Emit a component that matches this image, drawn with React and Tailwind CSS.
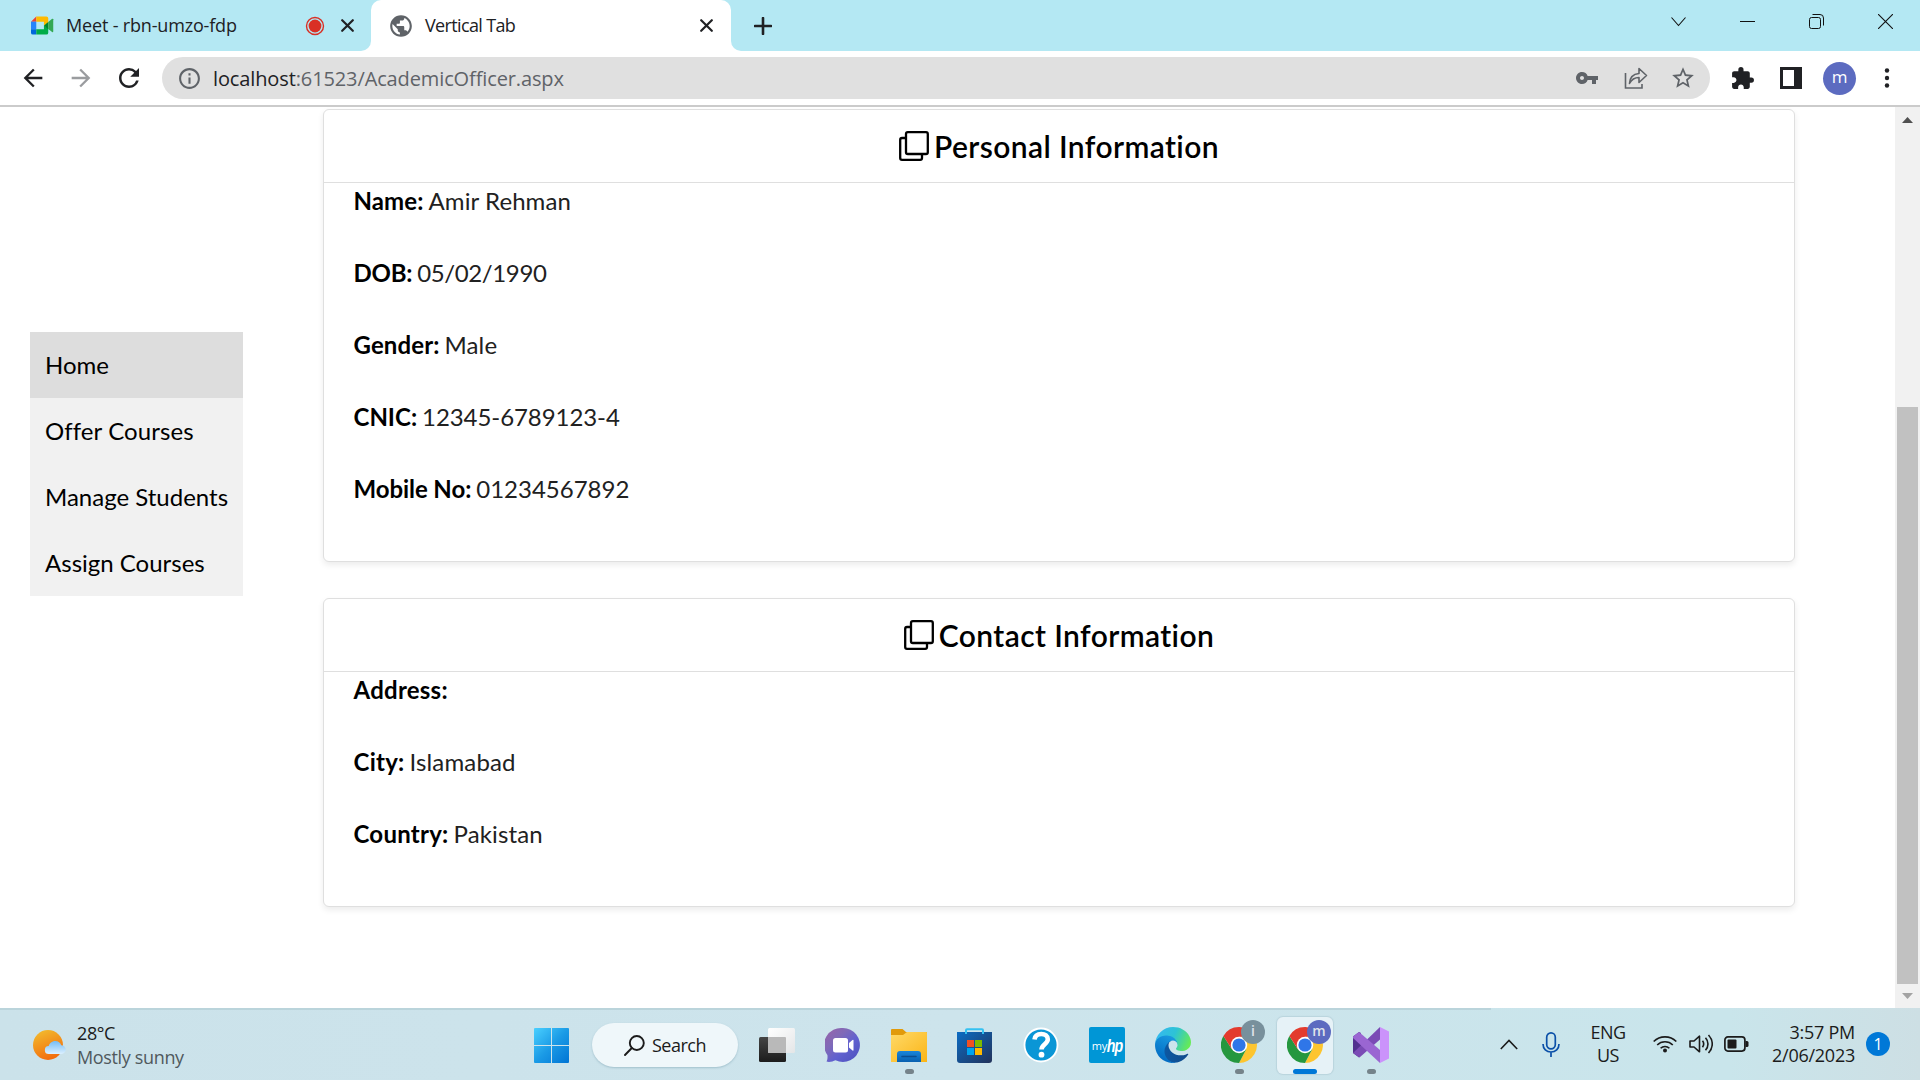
import React from "react";
import {
  MdInfoOutline,
  MdVpnKey,
  MdStarBorder,
  MdExtension,
  MdArrowBack,
  MdArrowForward,
  MdRefresh,
  MdPublic,
} from "react-icons/md";

const ui = "font-['Open_Sans','Noto_Sans',sans-serif]";

function Cross({ size = 13, w = 2.2 }) {
  return (
    <svg width={size} height={size} viewBox="0 0 13 13" className="shrink-0">
      <path d="M1.2 1.2 11.8 11.8M11.8 1.2 1.2 11.8" stroke="#202124" strokeWidth={w} strokeLinecap="round" />
    </svg>
  );
}

function MeetIcon() {
  return (
    <svg width="23" height="19" viewBox="0 0 24 19" className="mr-px shrink-0">
      <path d="M0 5.5 5.5 0v5.5z" fill="#ea4335" />
      <path d="M5.5 0H16a2 2 0 0 1 2 2v5l-4.5 2.5v-4h-8z" fill="#ffba00" />
      <path d="M0 5.5h5.5v8H0z" fill="#2684fc" />
      <path d="M0 13.5h5.5V19H2a2 2 0 0 1-2-2z" fill="#0066da" />
      <path d="M5.5 13.5h8v-4L18 12v5a2 2 0 0 1-2 2H5.5z" fill="#00ac47" />
      <path d="M13.5 9.5 18 5.8v7.5z" fill="#00832d" />
      <path d="m18 5.8 4-3.3c.6-.4 1.2 0 1.2.6v12.6c0 .7-.7 1-1.2.6l-4-3.2z" fill="#34a853" />
    </svg>
  );
}

function TabStrip() {
  return (
    <div className="flex h-[51px] bg-[#b4e8f3]">
      <div className="flex w-[371px] bg-white">
        <div className="flex h-[51px] w-[371px] items-center rounded-br-[10px] bg-[#b4e8f3] pl-[31px]">
          <MeetIcon />
          <span className="ml-[11px] w-[239px] whitespace-nowrap text-[18px] tracking-[-0.17px] text-[#202124]">Meet - rbn-umzo-fdp</span>
          <svg width="20" height="20" viewBox="0 0 20 20" className="shrink-0">
            <circle cx="10" cy="10" r="8.5" fill="none" stroke="#d93025" strokeWidth="1.4" />
            <circle cx="10" cy="10" r="6.4" fill="#d93025" />
          </svg>
          <span className="ml-4"><Cross /></span>
        </div>
      </div>
      <div className="flex w-[360px] bg-[#b4e8f3]">
        <div className="flex w-[360px] items-center rounded-t-[10px] bg-white pl-[17px]">
          <MdPublic size={26} color="#5f6368" className="shrink-0" />
          <span className="ml-[11px] w-[275px] whitespace-nowrap text-[18px] tracking-[-0.65px] text-[#202124]">Vertical Tab</span>
          <Cross />
        </div>
      </div>
      <div className="flex flex-1 bg-white">
        <div className="flex flex-1 items-center rounded-bl-[10px] bg-[#b4e8f3] pl-[23px]">
          <svg width="18" height="18" viewBox="0 0 18 18">
            <path d="M9 1v16M1 9h16" stroke="#202124" strokeWidth="2.6" strokeLinecap="round" />
          </svg>
          <div className="mb-[8px] ml-auto mr-[27px] flex items-center gap-[54px]">
            <svg width="15" height="15" viewBox="0 0 15 15"><path d="M.5 3.5l7 8 7-8" fill="none" stroke="#111" strokeWidth="1.1" /></svg>
            <svg width="15" height="15" viewBox="0 0 15 15"><path d="M0 7.5h15" stroke="#111" /></svg>
            <svg width="15" height="15" viewBox="0 0 15 15" fill="none" stroke="#111">
              <rect x=".5" y="3.5" width="11" height="11" rx="2" />
              <path d="M3.5 .5H11a3.5 3.5 0 0 1 3.5 3.500V11.500" />
            </svg>
            <svg width="15" height="15" viewBox="0 0 15 15"><path d="M0 0l15 15M15 0L0 15" stroke="#111" strokeWidth="1.1" /></svg>
          </div>
        </div>
      </div>
    </div>
  );
}

function Toolbar() {
  return (
    <div className="flex h-[56px] items-center border-b-2 border-[#cbcbcb] bg-white pl-[19px]">
      <MdArrowBack size={28} color="#202124" className="shrink-0" />
      <MdArrowForward size={28} color="#9a9c9f" className="ml-[20px] shrink-0" />
      <MdRefresh size={30} color="#202124" className="ml-[19px] shrink-0" />
      <div className="ml-[18px] flex h-[42px] w-[1548px] shrink-0 items-center rounded-full bg-[#e0e0e0] pl-[15px]">
        <MdInfoOutline size={25} color="#5f6368" className="shrink-0" />
        <span className="ml-[11px] whitespace-nowrap pt-px text-[20px] tracking-[-0.12px] text-[#5f6368]">
          <span className="text-[#202124]">localhost</span>:61523/AcademicOfficer.aspx
        </span>
        <div className="ml-auto mr-[14px] flex items-center">
          <MdVpnKey size={24} color="#5f6368" />
          <svg width="24" height="24" viewBox="0 0 24 24" className="ml-[25px]" fill="none" stroke="#5f6368" strokeWidth="1.6">
            <path d="M1.500 7v15h16.500v-4" />
            <path d="M5.500 17.500c.3-6 3.500-9.500 9.500-10V2.500l7.500 7-7.500 7v-5c-4.500 0-7.500 2-9.500 6z" strokeLinejoin="round" />
          </svg>
          <MdStarBorder size={26} color="#5f6368" className="ml-[22px]" />
        </div>
      </div>
      <MdExtension size={25} color="#202124" className="ml-[20px] shrink-0" />
      <svg width="22" height="22" viewBox="0 0 22 22" className="ml-[25px] shrink-0">
        <path fillRule="evenodd" d="M0 0h22v22H0zM3 3v16h11V3z" fill="#202124" />
      </svg>
      <div className="ml-[21px] flex size-[33px] shrink-0 items-center justify-center rounded-full bg-[#5c6bc0] pb-[2px] text-[17px] text-white">m</div>
      <svg width="6" height="20" viewBox="0 0 6 20" className="ml-[28px] shrink-0" fill="#202124">
        <circle cx="3" cy="2.500" r="2.200" /><circle cx="3" cy="10" r="2.200" /><circle cx="3" cy="17.500" r="2.200" />
      </svg>
    </div>
  );
}

function CloneIcon() {
  return (
    <svg width="30" height="30" viewBox="0 0 30 30" className="shrink-0" fill="none" stroke="#000" strokeWidth="2.300">
      <rect x="7" y="1.200" width="21.800" height="21.800" rx="1.800" />
      <path d="M7 7H3a1.800 1.800 0 0 0-1.800 1.800V27A1.800 1.800 0 0 0 3 28.800h18.200A1.800 1.800 0 0 0 23 27v-4" />
    </svg>
  );
}

function Card({ title, rows, className }) {
  return (
    <section className={"rounded-[6px] border border-[#dfdfdf] bg-white shadow-[0_3px_6px_rgba(0,0,0,0.08)] " + className}>
      <h2 className="flex h-[73px] items-center justify-center gap-[5px] border-b border-[#dfdfdf] text-[30px] font-semibold tracking-[0.4px]">
        <CloneIcon />
        <span>{title}</span>
      </h2>
      <dl className="pl-[29.500px]">
        {rows.map(([k, v, labelSpacing, spacing]) => (
          <div key={k} className="mb-[36px] flex h-[36px] items-center gap-[5px] whitespace-nowrap text-[24px]">
            <dt className={"font-bold " + labelSpacing}>{k}:</dt>
            <dd className={"text-[#212121] " + spacing}>{v}</dd>
          </div>
        ))}
      </dl>
    </section>
  );
}

const personal = [
  ["Name", "Amir Rehman", "tracking-[0.12px]", "tracking-[0.08px]"],
  ["DOB", "05/02/1990", "tracking-[-0.25px]", "tracking-[-0.37px]"],
  ["Gender", "Male", "tracking-[0.12px]", "tracking-[0.1px]"],
  ["CNIC", "12345-6789123-4", "tracking-[0px]", "tracking-[-0.07px]"],
  ["Mobile No", "01234567892", "tracking-[-0.08px]", "tracking-[0px]"],
];
const contact = [
  ["Address", "", "tracking-[0.25px]", ""],
  ["City", "Islamabad", "tracking-[0.25px]", "tracking-[0.15px]"],
  ["Country", "Pakistan", "tracking-[0.25px]", "tracking-[0.12px]"],
];

function Page() {
  return (
    <div className="flex h-[901px] bg-white font-['Lato',sans-serif] text-black">
      <nav className="ml-[30px] mt-[225px] h-[264px] w-[213px] bg-[#f1f1f1] text-[24px]">
        {["Home", "Offer Courses", "Manage Students", "Assign Courses"].map((t, i) => (
          <div key={t} className={"flex h-[66px] items-center whitespace-nowrap pl-[15px] " + (i === 0 ? "bg-[#dddddd]" : "") + (i === 1 ? "tracking-[0.1px]" : "")}>{t}</div>
        ))}
      </nav>
      <main className="ml-[80px] mt-[2px] w-[1472px]">
        <Card title="Personal Information" rows={personal} className="h-[453px]" />
        <Card title="Contact Information" rows={contact} className="mt-[36px] h-[309px]" />
      </main>
      <div className="ml-auto flex w-[25px] flex-col items-center bg-[#f1f1f1]">
        <svg width="11" height="6" viewBox="0 0 11 6" className="mt-[10px]"><path d="M0 6 5.500 0 11 6z" fill="#505050" /></svg>
        <div className="mt-[284px] h-[577px] w-[21px] bg-[#c1c1c1]" />
        <svg width="11" height="6" viewBox="0 0 11 6" className="mt-[9px]"><path d="M0 0h11L5.500 6z" fill="#a3a3a3" /></svg>
      </div>
    </div>
  );
}

const WinLogo = () => (
  <svg width="35" height="35" viewBox="0 0 35 35">
    <defs>
      <linearGradient id="win" x1="0" y1="0" x2="1" y2="1">
        <stop offset="0" stopColor="#4ad0ff" /><stop offset=".5" stopColor="#1b9be6" /><stop offset="1" stopColor="#0074d4" />
      </linearGradient>
    </defs>
    <path d="M1 0h16v17H0V1a1 1 0 0 1 1-1zM18 0h16a1 1 0 0 1 1 1v16H18zM0 18h17v17H1a1 1 0 0 1-1-1zM18 18h17v16a1 1 0 0 1-1 1H18z" fill="url(#win)" />
  </svg>
);

const TaskView = () => (
  <svg width="36" height="34" viewBox="0 0 36 34">
    <defs>
      <linearGradient id="tvd" x1="0" y1="0" x2="0" y2="1"><stop offset="0" stopColor="#454545" /><stop offset="1" stopColor="#1c1c1c" /></linearGradient>
      <linearGradient id="tvl" x1="0" y1="0" x2="1" y2="1"><stop offset="0" stopColor="#fff" /><stop offset="1" stopColor="#e4e6e7" /></linearGradient>
    </defs>
    <rect x="0" y="9" width="27" height="25" rx="1.500" fill="url(#tvd)" />
    <rect x="9" y="0" width="27" height="25" rx="1.500" fill="url(#tvl)" />
    <path d="M9 9h17a1 1 0 0 1 1 1v15H10a1 1 0 0 1-1-1z" fill="#b9b9b9" />
  </svg>
);

const Chat = () => (
  <svg width="36" height="36" viewBox="0 0 36 36">
    <defs>
      <linearGradient id="chat" x1="0" y1="0" x2="1" y2="1">
        <stop offset="0" stopColor="#9a62a8" /><stop offset=".35" stopColor="#7f6ab8" /><stop offset=".6" stopColor="#6161cf" /><stop offset="1" stopColor="#4b50bd" />
      </linearGradient>
    </defs>
    <path d="M18 1a17 17 0 1 1-7.500 32.300C8 34.500 4 35.500 1.500 34.500c1-1.500 1.200-4 .9-6.500A17 17 0 0 1 18 1z" fill="url(#chat)" />
    <rect x="8" y="11" width="15" height="14.500" rx="2.500" fill="#fff" />
    <path d="M24 16l3.500-3q1-.6 1 .6v9.400q0 1-1 .5l-3.500-3z" fill="#fff" />
  </svg>
);

const Folder = () => (
  <svg width="36" height="36" viewBox="0 0 36 36">
    <defs>
      <linearGradient id="fold" x1="0" y1="0" x2="1" y2="1"><stop offset="0" stopColor="#ffd968" /><stop offset="1" stopColor="#fbb516" /></linearGradient>
      <linearGradient id="foldb" x1="0" y1="0" x2="0" y2="1"><stop offset="0" stopColor="#1a86da" /><stop offset="1" stopColor="#0860b0" /></linearGradient>
    </defs>
    <path d="M1 2h10.500l3.500 3h20a1 1 0 0 1 1 1v6H0V3a1 1 0 0 1 1-1z" fill="#e19a0b" />
    <path d="M0 8h12l4-3h19a1 1 0 0 1 1 1v29H0z" fill="url(#fold)" />
    <path d="M6 35v-8a3 3 0 0 1 3-3h18a3 3 0 0 1 3 3v8z" fill="url(#foldb)" />
    <path d="M11 29.500h14" stroke="#0b4d8f" strokeWidth="1.500" strokeLinecap="round" />
  </svg>
);

const Store = () => (
  <svg width="36" height="36" viewBox="0 0 36 36">
    <defs><linearGradient id="store" x1="0" y1="0" x2="1" y2="1"><stop offset="0" stopColor="#0b6cc4" /><stop offset="1" stopColor="#22325a" /></linearGradient></defs>
    <path d="M0 5h35v28a3 3 0 0 1-3 3H3a3 3 0 0 1-3-3z" fill="url(#store)" />
    <path d="M9 7V3.200a1 1 0 0 1 1-1h15a1 1 0 0 1 1 1V7" fill="none" stroke="#35c1f1" strokeWidth="2" />
    <path d="M10 13h7v7h-7z" fill="#f25022" /><path d="M18 13h7v7h-7z" fill="#7fba00" />
    <path d="M10 21h7v7h-7z" fill="#00a4ef" /><path d="M18 21h7v7h-7z" fill="#ffb900" />
  </svg>
);

const Help = () => (
  <svg width="36" height="36" viewBox="0 0 36 36">
    <circle cx="18" cy="18" r="16.500" fill="#0a96d6" stroke="#fff" strokeWidth="1.800" />
    <path d="M11.500 12.500C12 8.500 15 7 18.300 7c3.700 0 6.500 2 6.500 5.300 0 4.700-6.300 5.200-6.300 10.200" fill="none" stroke="#fff" strokeWidth="4.600" />
    <circle cx="18.500" cy="27.700" r="2.900" fill="#fff" />
  </svg>
);

const MyHp = () => (
  <div className="flex size-9 items-center justify-center rounded-[2px] bg-[#0096d6] text-white">
    <span className="text-[11px] leading-none tracking-[-0.3px]">my</span>
    <span className="-mx-[3px] scale-x-75 font-['Liberation_Sans',sans-serif] text-[19px] font-bold italic leading-none tracking-[-1px]">hp</span>
  </div>
);

const Edge = () => (
  <svg width="36" height="36" viewBox="0 0 256 256">
    <defs>
      <linearGradient id="e1" x1="0" y1="0" x2="1" y2="0"><stop offset="0" stopColor="#0c59a4" /><stop offset="1" stopColor="#114a8b" /></linearGradient>
      <linearGradient id="e2" x1=".7" y1="0" x2=".3" y2="1"><stop offset="0" stopColor="#1b9de2" /><stop offset="1" stopColor="#0067c0" /></linearGradient>
      <linearGradient id="e3" x1="0" y1=".3" x2="1" y2=".6"><stop offset="0" stopColor="#35b8f1" /><stop offset=".5" stopColor="#2dc3d5" /><stop offset="1" stopColor="#66eb55" /></linearGradient>
    </defs>
    <path d="M231 190.500c-3.400 1.800-6.900 3.400-10.500 4.700a101 101 0 0 1-36 6.500c-47.300 0-88.600-32.500-88.600-74.300a31.500 31.500 0 0 1 16.400-27.300c-42.800 1.800-53.800 46.400-53.800 72.500 0 74 68.100 81.400 82.800 81.400 7.900 0 19.800-2.300 27-4.600l1.300-.4a128.300 128.300 0 0 0 66.600-52.800 4 4 0 0 0-5.200-5.700z" fill="url(#e1)" />
    <path d="M105.700 241.400A79.200 79.200 0 0 1 83 220.100a80.700 80.700 0 0 1 29.500-120c3.200-1.500 8.500-4.100 15.600-4a32.400 32.400 0 0 1 25.700 13 31.900 31.900 0 0 1 6.300 18.700c0-.2 24.500-79.600-80-79.600-43.900 0-80 41.700-80 78.200 0 19.300 4.100 38.500 12.100 56a128 128 0 0 0 156.500 67 75.500 75.500 0 0 1-62.800-8z" fill="url(#e2)" />
    <path d="M152.300 148.900c-.9 1-3.400 2.500-3.400 5.600 0 2.600 1.700 5.200 4.800 7.300 14.300 10 41.400 8.600 41.500 8.600a59.500 59.500 0 0 0 30.300-8.300 61.400 61.400 0 0 0 30.400-52.900c.3-22.400-8-37.300-11.300-43.900C223.500 23.900 177.700 0 128 0A128 128 0 0 0 0 126.200c.5-36.500 36.800-66 80-66 3.500 0 23.500.3 42 10a72.600 72.600 0 0 1 30.900 29.300c6.100 10.600 7.200 24.100 7.200 29.500s-2.700 13.300-7.800 19.900z" fill="url(#e3)" />
  </svg>
);

const Chrome = () => (
  <svg width="36" height="36" viewBox="0 0 48 48">
    <path d="M24 13h21.300A24 24 0 0 1 24 48l9.600-18.500z" fill="#fdc52f" />
    <path d="M14.500 29.500 3.200 12A24 24 0 0 0 24 48l9.600-18.500z" fill="#25973f" />
    <path d="M3.200 12A24 24 0 0 1 45.300 13H24L14.500 29.500z" fill="#e33b2e" />
    <circle cx="24" cy="24" r="11" fill="#fff" />
    <circle cx="24" cy="24" r="8.800" fill="#2f76e8" />
  </svg>
);

const VisualStudio = () => (
  <svg width="36" height="36" viewBox="0 0 36 36">
    <path d="M0 9.500 6 5l2 1v21l-2 3.500L0 26z" fill="#52308f" />
    <path d="M0 26 27 0v12.500L6.500 30.500z" fill="#7a4bb5" />
    <path d="M0 9.500 6 5l21 18v13L0 11z" fill="#9a66d2" />
    <path d="M27 0l9 4.500v27L27 36z" fill="#cb93fb" />
  </svg>
);

function Badge({ letter, className }) {
  return (
    <span className={"absolute -right-[8px] -top-[7px] flex size-6 items-center justify-center rounded-full pb-[2px] text-[14px] font-semibold leading-none text-[#dfe3ea] " + className}>
      {letter}
    </span>
  );
}

function TaskItem({ children, dot, active }) {
  return (
    <div className="flex h-full w-[66px] flex-col items-center">
      <div className={"mt-[7px] flex h-[57px] w-[56px] flex-col items-center rounded-[6px] pt-[10px] " + (active ? "bg-[#e6f2f7] shadow-[0_0_1px_1px_rgba(160,190,200,0.4)]" : "")}>
        <div className="relative flex h-9 w-9 items-center justify-center">{children}</div>
        {dot && <div className={"mt-[6px] h-[5px] rounded-full " + (active ? "w-6 bg-[#0078d7]" : "w-[9px] bg-[#75838a]")} />}
      </div>
    </div>
  );
}

function Taskbar() {
  return (
    <div className="flex h-[72px] w-full bg-[linear-gradient(90deg,#cbe2ea_0%,#cde4ec_50%,#c9e5eb_90%,#cddfe4_100%)] text-[#1b1b1b]">
      <div className="flex w-[1491px] border-t-2 border-[#bad4db]">
        <div className="flex w-[534px] pl-[33px] pt-[12px]">
          <svg width="34" height="46" viewBox="0 0 34 46" className="shrink-0">
            <defs>
              <linearGradient id="sun" x1=".2" y1="0" x2=".6" y2="1"><stop offset="0" stopColor="#f2bb2e" /><stop offset="1" stopColor="#f26a0c" /></linearGradient>
              <linearGradient id="cld" x1="0" y1="0" x2="0" y2="1"><stop offset="0" stopColor="#74bdf6" /><stop offset="1" stopColor="#dcf0ff" /></linearGradient>
            </defs>
            <circle cx="15" cy="23" r="15" fill="url(#sun)" />
            <path d="M16 32a4 4 0 0 1-.3-8c.8-2.600 3.200-5 6.500-5 3.200 0 5.200 2 6 4.200a4.400 4.400 0 0 1 .3 8.800z" fill="url(#cld)" />
          </svg>
          <div className="-mt-px ml-[10px] text-[18px] leading-[24px]">
            <div className="tracking-[-0.4px]">28°C</div>
            <div className="tracking-[-0.35px] text-[#50595d]">Mostly sunny</div>
          </div>
        </div>
        <div className="mt-[18px]"><WinLogo /></div>
        <div className="ml-[23px] mt-[13px] flex h-[44px] w-[146px] items-center rounded-full bg-[#eff7fa] pl-8 shadow-[0_1px_2px_rgba(120,160,175,0.5)]">
          <svg width="21" height="21" viewBox="0 0 21 21" fill="none" stroke="#1b1b1b" strokeWidth="1.900">
            <circle cx="12.800" cy="8" r="7" /><path d="M7.800 13 1 20" strokeLinecap="round" />
          </svg>
          <span className="ml-[7px] text-[18px] tracking-[-0.5px]">Search</span>
        </div>
        <div className="ml-[6px] flex h-[70px]">
          <TaskItem><TaskView /></TaskItem>
          <TaskItem><Chat /></TaskItem>
          <TaskItem dot><Folder /></TaskItem>
          <TaskItem><Store /></TaskItem>
          <TaskItem><Help /></TaskItem>
          <TaskItem><MyHp /></TaskItem>
          <TaskItem><Edge /></TaskItem>
          <TaskItem dot><Chrome /><Badge letter="i" className="bg-[#78909c]" /></TaskItem>
          <TaskItem dot active><Chrome /><Badge letter="m" className="bg-[#5c6bc0]" /></TaskItem>
          <TaskItem dot><VisualStudio /></TaskItem>
        </div>
      </div>
      <div className="flex flex-1 items-center">
        <svg width="18" height="11" viewBox="0 0 18 11" className="ml-[9px] shrink-0" fill="none" stroke="#1b1b1b" strokeWidth="1.600"><path d="M.8 10 9 1.500 17.200 10" /></svg>
        <svg width="18" height="25" viewBox="0 0 18 25" className="ml-[24px] shrink-0" fill="none" stroke="#0b50a8" strokeWidth="1.700">
          <rect x="4.700" y=".9" width="8.600" height="16" rx="4.300" /><path d="M1 12c0 5 3.500 8 8 8s8-3 8-8M9 20v5" />
        </svg>
        <div className="ml-[26px] w-[44px] text-center text-[18px] leading-[23px] tracking-[-0.5px]">
          <div>ENG</div><div>US</div>
        </div>
        <svg width="24" height="18" viewBox="0 0 24 18" className="ml-[23px] shrink-0" fill="none" stroke="#1b1b1b" strokeWidth="1.600">
          <path d="M.7 6.500a16 16 0 0 1 22.600 0M4.200 10a11 11 0 0 1 15.600 0M7.600 13.300a6.200 6.200 0 0 1 8.800 0" /><circle cx="12" cy="15.500" r="2" fill="#1b1b1b" stroke="none" />
        </svg>
        <svg width="24" height="20" viewBox="0 0 24 20" className="ml-[12px] shrink-0" fill="none" stroke="#1b1b1b" strokeWidth="1.600" strokeLinejoin="round">
          <path d="M1 7h4l5.500-4.800v15.600L5 13H1zM13.500 6.800c1.500 2 1.500 4.400 0 6.400M16.500 3.800c3.300 3.700 3.300 8.700 0 12.400M19.500 1c5 5.500 5 12.500 0 18" />
        </svg>
        <svg width="25" height="16" viewBox="0 0 25 16" className="ml-[11px] shrink-0">
          <rect x=".9" y=".9" width="20" height="14.200" rx="3" fill="none" stroke="#1b1b1b" strokeWidth="1.700" /><rect x="3.500" y="3.500" width="9" height="9" rx="1" fill="#1b1b1b" />
          <path d="M21.500 5h1.500a1.500 1.500 0 0 1 1.500 1.500v3A1.500 1.500 0 0 1 23 11h-1.500z" fill="#1b1b1b" />
        </svg>
        <div className="w-[106px] whitespace-nowrap text-right text-[18px] leading-[23px] tracking-[-0.25px]">
          <div>3:57 PM</div><div>2/06/2023</div>
        </div>
        <div className="ml-[11px] flex size-6 items-center justify-center rounded-full bg-[#0078d7] text-[16px] text-white">1</div>
      </div>
    </div>
  );
}

export default function App() {
  return (
    <div className={"h-[1080px] w-[1920px] overflow-hidden bg-white " + ui}>
      <TabStrip />
      <Toolbar />
      <Page />
      <Taskbar />
    </div>
  );
}
